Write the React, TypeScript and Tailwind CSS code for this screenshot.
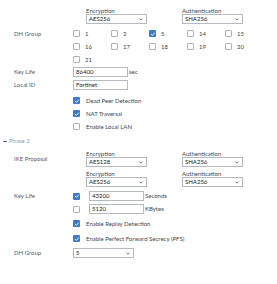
import { FC, ReactNode } from 'react'

const Check: FC<{ on?: boolean }> = ({ on }) =>
  on ? (
    <span className="flex h-[7px] w-[7px] items-center justify-center rounded-[1px] bg-[#3b7ec6]">
      <svg viewBox="0 0 8 8" className="h-[6px] w-[6px]" fill="none">
        <path d="M1.5 4.2 3.2 5.8 6.5 2.2" stroke="white" strokeWidth="1.2" />
      </svg>
    </span>
  ) : (
    <span className="block h-[7px] w-[7px] rounded-[1px] border border-[#aab4be] bg-white" />
  )

const Select: FC<{ value: string; w?: string }> = ({ value, w = 'w-[61px]' }) => (
  <div className={`flex h-[10px] ${w} items-center justify-between border border-[#b4bac1] bg-white pl-[2px] pr-[3px] text-[#222]`}>
    <span>{value}</span>
    <svg viewBox="0 0 6 4" className="h-[3px] w-[4px]" fill="none">
      <path d="M0.7 0.8 3 3 5.3 0.8" stroke="#333" strokeWidth="1" />
    </svg>
  </div>
)

const Input: FC<{ value: string }> = ({ value }) => (
  <div className="flex h-[10px] w-[55px] items-center border border-[#b4bac1] bg-white pl-[2px] text-[#222]">
    {value}
  </div>
)

const Proposal: FC<{ enc: string; auth: string }> = ({ enc, auth }) => (
  <div className="ml-[13px] flex gap-[35px]">
    <div className="flex flex-col">
      <span className="h-[6px] leading-[6px] text-[#3d4650]">Encryption</span>
      <Select value={enc} />
    </div>
    <div className="flex flex-col">
      <span className="h-[6px] leading-[6px] text-[#3d4650]">Authentication</span>
      <Select value={auth} />
    </div>
  </div>
)

const Row: FC<{ label?: string; className?: string; children: ReactNode }> = ({ label, className = '', children }) => (
  <div className={`flex ${className}`}>
    <div className="flex w-[59px] shrink-0 items-center text-[#4f5f72]">{label}</div>
    <div className="flex flex-col">{children}</div>
  </div>
)

const Opt: FC<{ on?: boolean; text: string }> = ({ on, text }) => (
  <div className="flex h-[13px] items-center gap-[6px] text-[#3d4650]">
    <Check on={on} />
    <span>{text}</span>
  </div>
)

export default function App() {
  const groups = [
    ['1', '2', '5', '14', '15'],
    ['16', '17', '18', '19', '20'],
    ['21'],
  ]
  return (
    <div className="h-[284px] w-[277px] overflow-hidden bg-white pl-[14px] pt-[8px] font-['Lato','Liberation_Sans',sans-serif] text-[6px] leading-none">
      <Row>
        <Proposal enc="AES256" auth="SHA256" />
      </Row>

      <div className="mt-[3px] flex">
        <div className="flex h-[13px] w-[59px] shrink-0 items-center text-[#4f5f72]">DH Group</div>
        <div className="flex flex-col">
          {groups.map((row, i) => (
            <div key={i} className="flex h-[13px]">
              {row.map((g) => (
                <div key={g} className="flex w-[38px] items-center gap-[5px] text-[#3d4650]">
                  <Check on={g === '5'} />
                  <span>{g}</span>
                </div>
              ))}
            </div>
          ))}
        </div>
      </div>

      <Row label="Key Life" className="mt-[1px] h-[10px]">
        <div className="flex items-center">
          <Input value="86400" />
          <span className="ml-[1px] text-[#3d4650]">sec</span>
        </div>
      </Row>
      <Row label="Local ID" className="mt-[3px] h-[10px]">
        <Input value="Fortinet" />
      </Row>

      <Row className="mt-[4px]">
        <Opt on text="Dead Peer Detection" />
        <Opt on text="NAT Traversal" />
        <Opt text="Enable Local LAN" />
      </Row>

      <div className="-ml-[11px] mt-[2px] flex h-[12px] items-center gap-[2px] text-[#8ea2b8]">
        <span className="block h-[1px] w-[4px] bg-[#5d7390]" />
        <span>Phase 2</span>
      </div>

      <Row label="IKE Proposal" className="mt-[4px]">
        <Proposal enc="AES128" auth="SHA256" />
      </Row>
      <Row className="mt-[4px]">
        <Proposal enc="AES256" auth="SHA256" />
      </Row>

      <div className="mt-[4px] flex">
        <div className="flex h-[10px] w-[59px] shrink-0 items-center text-[#4f5f72]">Key Life</div>
        <div className="flex flex-col gap-[3px]">
          <div className="flex h-[10px] items-center">
            <Check on />
            <span className="ml-[9px]"><Input value="43200" /></span>
            <span className="ml-[1px] text-[#3d4650]">Seconds</span>
          </div>
          <div className="flex h-[10px] items-center">
            <Check />
            <span className="ml-[9px]"><Input value="5120" /></span>
            <span className="ml-[1px] text-[#3d4650]">KBytes</span>
          </div>
        </div>
      </div>

      <Row className="mt-[3px]">
        <div className="flex flex-col gap-[2px]">
          <Opt on text="Enable Replay Detection" />
          <Opt on text="Enable Perfect Forward Secrecy (PFS)" />
        </div>
      </Row>

      <Row label="DH Group" className="mt-[3px] h-[10px]">
        <Select value="5" />
      </Row>
    </div>
  )
}
